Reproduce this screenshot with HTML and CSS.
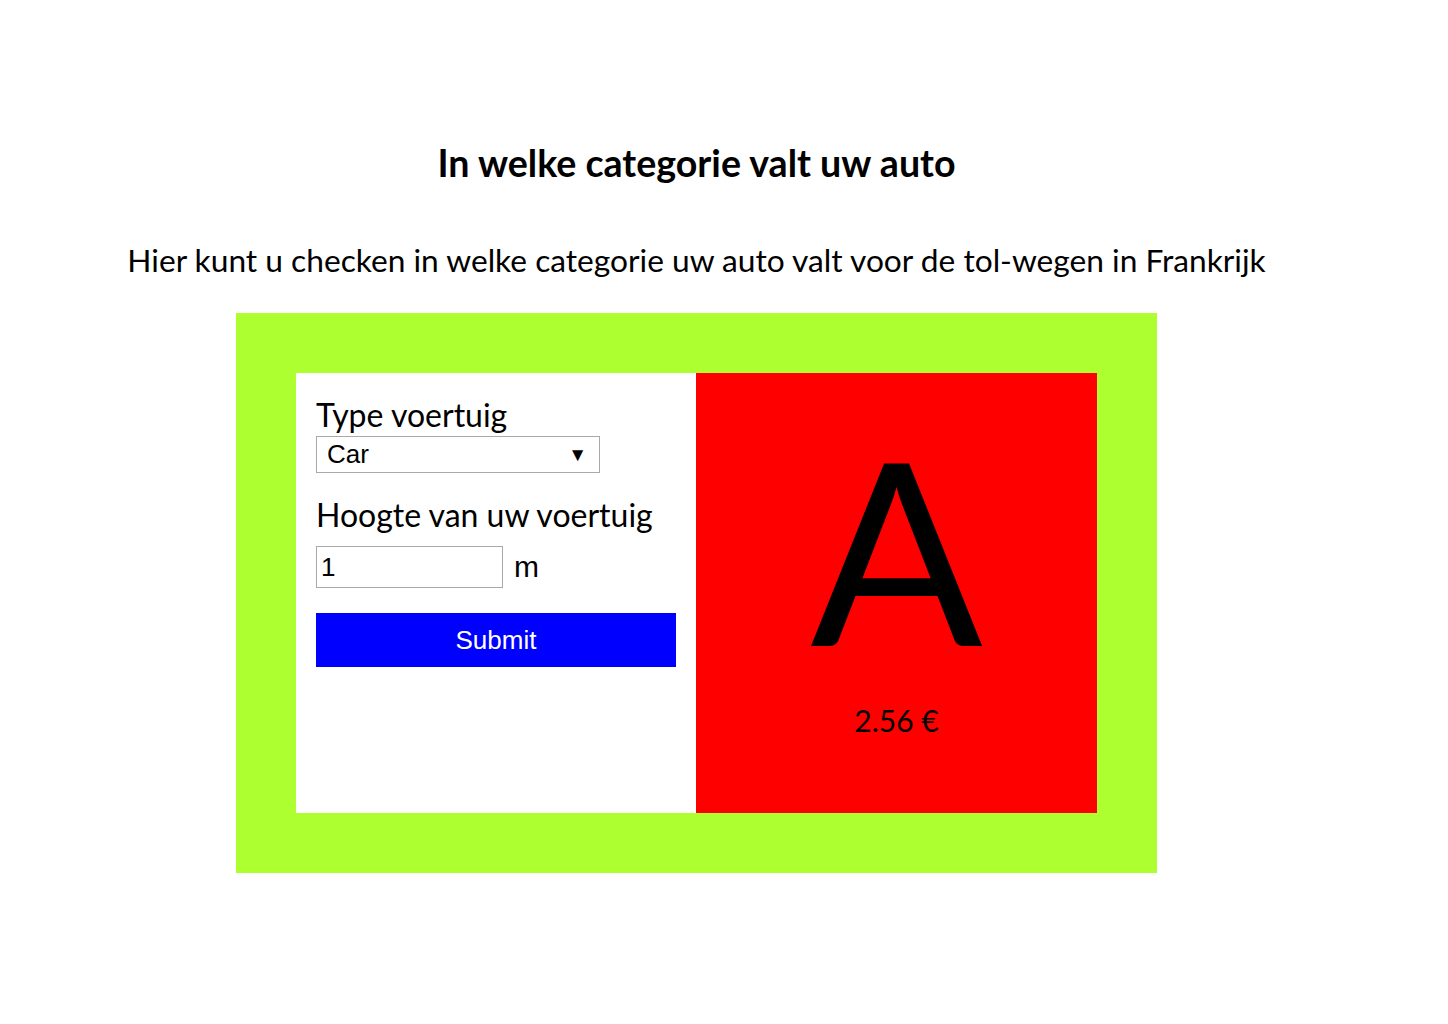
FILE: index.html
```html
<!DOCTYPE html>
<html lang="nl">
<head>
<meta charset="utf-8">
<title>Tol categorie</title>
<link rel="stylesheet" href="styles.css">
</head>
<body>
<main class="page">
  <h1 class="title">In welke categorie valt uw auto</h1>
  <p class="intro">Hier kunt u checken in welke categorie uw auto valt voor de tol-wegen in Frankrijk</p>
  <section class="frame">
    <form class="form-panel">
      <label class="label" for="type">Type voertuig</label>
      <div class="select" id="type">
        <span class="select-value">Car</span>
        <span class="select-arrow">&#9660;</span>
      </div>
      <label class="label label-height" for="height">Hoogte van uw voertuig</label>
      <div class="height-row">
        <input class="height-input" id="height" type="text" value="1">
        <span class="unit">m</span>
      </div>
      <button class="submit" type="button">Submit</button>
    </form>
    <div class="result">
      <div class="category">A</div>
      <div class="price">2.56 €</div>
    </div>
  </section>
</main>
</body>
</html>
```
FILE: styles.css
```css
html, body {
  margin: 0;
  padding: 0;
  background: #fff;
}
body {
  font-family: Lato, "Open Sans", sans-serif;
  color: #000;
}
.page {
  width: 1393px;
  display: flex;
  flex-direction: column;
  align-items: center;
  padding-top: 140px;
}
.title {
  margin: 0;
  font-size: 37.6px;
  font-weight: 700;
  line-height: 46px;
}
.intro {
  margin: 54px 0 0;
  font-size: 31.7px;
  line-height: 40px;
}
.frame {
  margin-top: 33px;
  background: #adff2f;
  padding: 60px;
  display: flex;
}
.form-panel {
  width: 360px;
  height: 400px;
  background: #fff;
  padding: 20px;
  display: flex;
  flex-direction: column;
  align-items: flex-start;
}
.label {
  font-size: 32px;
  line-height: 43px;
}
.select {
  box-sizing: border-box;
  width: 284px;
  height: 37px;
  border: 1px solid #a9a9a9;
  display: flex;
  align-items: center;
  justify-content: space-between;
  padding: 0 12px 0 10px;
  font-family: "Liberation Sans", Arial, sans-serif;
  font-size: 26px;
}
.select-arrow {
  font-size: 19px;
}
.label-height {
  margin-top: 20px;
}
.height-row {
  display: flex;
  align-items: center;
  gap: 11px;
  margin-top: 10px;
}
.height-input {
  box-sizing: border-box;
  width: 187px;
  height: 42px;
  border: 1px solid #a9a9a9;
  padding: 0 4px;
  font-family: "Liberation Sans", Arial, sans-serif;
  font-size: 26px;
  margin: 0;
}
.unit {
  font-family: "Liberation Sans", Arial, sans-serif;
  font-size: 30px;
}
.submit {
  margin-top: 25px;
  width: 360px;
  height: 54px;
  border: none;
  background: #0000ff;
  color: #fff;
  font-family: "Liberation Sans", Arial, sans-serif;
  font-size: 26px;
}
.result {
  width: 401px;
  height: 440px;
  background: #ff0000;
  display: flex;
  flex-direction: column;
  align-items: center;
}
.category {
  font-size: 255px;
  line-height: 1;
  margin-top: 47px;
}
.price {
  font-size: 30px;
  margin-top: 27px;
}
```
